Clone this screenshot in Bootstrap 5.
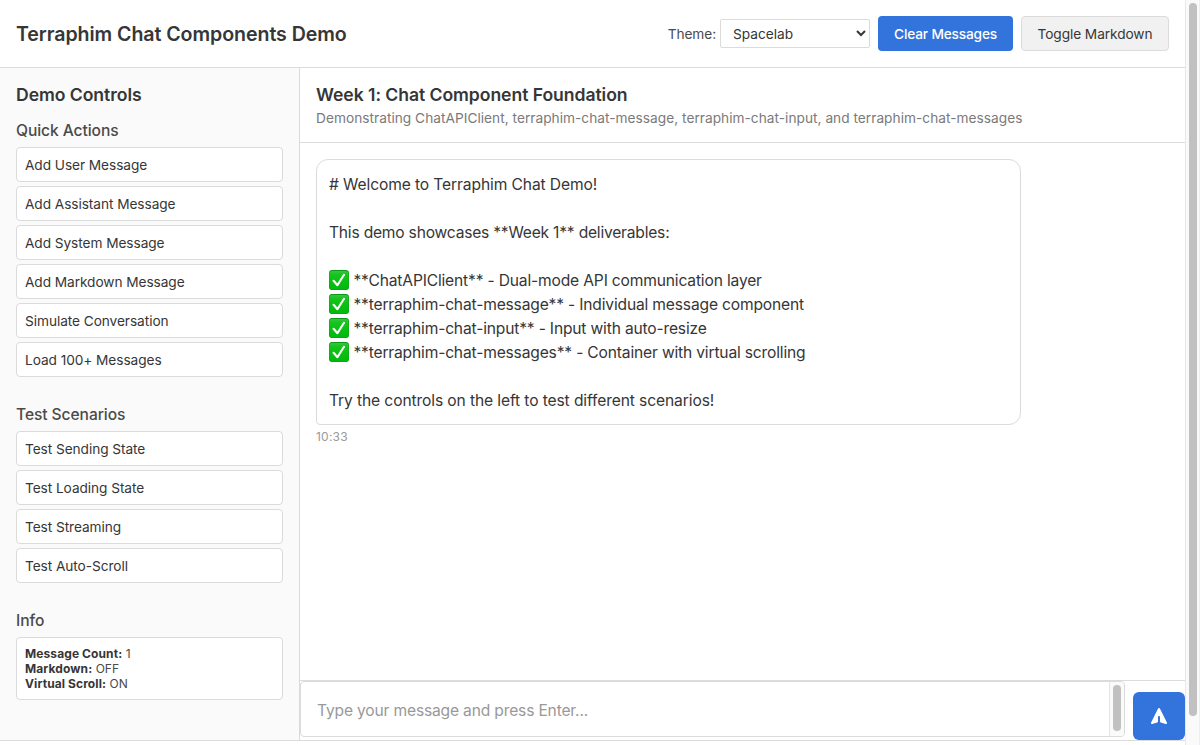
<!DOCTYPE html>
<html lang="en">
<head>
<meta charset="utf-8">
<meta name="viewport" content="width=device-width, initial-scale=1">
<title>Terraphim Chat Components Demo</title>
<link href="https://cdn.jsdelivr.net/npm/bootstrap@5.3.0/dist/css/bootstrap.min.css" rel="stylesheet">
<style>
:root{--line:#dbdbdb}
body{font-family:Inter,Roboto,sans-serif;font-size:15.6px;color:#363636;background:#fff;overflow:hidden;height:100vh}
.app-shell{height:741px;border-bottom:1px solid var(--line)}
.top-bar{height:68px;border-bottom:1px solid var(--line)}
.side{width:300px;background:#fafafa;border-right:1px solid var(--line)}
h1{font-size:19.6px;font-weight:600;line-height:24px;letter-spacing:-.07px}
h2{font-size:17.6px;font-weight:600;line-height:22px;letter-spacing:-.06px}
h3{font-size:15.6px;font-weight:500;line-height:19px;letter-spacing:-.08px;color:#4a4a4a;margin:28px 0 7px}
h2 + section h3{margin-top:15px}
.theme-label,.theme-select,.btn,.sub{font-size:13.7px}
.theme-label{color:#4a4a4a;letter-spacing:-.1px;padding-top:2px}
.theme-select{width:150px;height:29px;color:#363636;background:#fff;border:1px solid var(--line);border-radius:2px;padding:0 0 0 8px;margin-left:4px}
.btn{--bs-btn-border-radius:4px;height:35px;line-height:17px;padding:9px 0 7px}
.btn-clear,.btn-clear:hover{width:135px;background:#3273dc;color:#fff;border:0;font-weight:500;letter-spacing:-.17px;padding:10px 0 8px}
.btn-toggle{width:148px;background:#f1f1f1;color:#363636;border:1px solid var(--line);letter-spacing:-.08px}
.btn-side{background:#fff;border:1px solid var(--line);color:#363636;text-align:left;padding:9px 8px 7px;letter-spacing:-.07px}
.info-box{font-size:12px;line-height:15px;background:#fff;border:1px solid var(--line);border-radius:4px;height:63px;color:#4a4a4a}
.info-box strong{color:#363636;letter-spacing:.1px}
.main-head{height:75px;border-bottom:1px solid var(--line)}
.sub{color:#7a7a7a;line-height:17px;letter-spacing:.022px}
.bubble{width:705px;border:1px solid var(--line);border-radius:12px 12px 12px 4px;padding:12px;line-height:24px;letter-spacing:-.17px}
.bubble p{display:flex;align-items:center;height:24px;padding-top:2px;margin:0;white-space:nowrap}
.ls-wide{letter-spacing:-.11px}
.ls-tight{letter-spacing:-.21px}
.tick{width:20px;height:20px;margin:-2px 4.4px 0 0;flex:none}
.stamp{font-size:12px;line-height:17px;color:#999;letter-spacing:.22px;margin-top:3px}
.composer{height:60px;border-top:1px solid var(--line)}
.entry{height:56px;border:1px solid var(--line);border-radius:4px;color:#999;overflow:hidden}
.entry-text{padding:4px 0 0 16px;letter-spacing:-.17px}
.entry-track{width:15px;background:#fafafa;border-left:1px solid #e4e4e4;padding:3px 3px 5px}
.send{width:52px;height:48px;background:#3273dc;border:0;border-radius:6px;color:#fff;padding:0}
.page-track{width:15px;background:#fafafa;border-left:1px solid #e8e8e8;border-right:1px solid #eee;padding:3px 2px 29px 3px}
.thumb{width:8px;height:100%;border-radius:4px;background:#c1c1c1}
</style>
</head>
<body class="d-flex">
<svg width="0" height="0" class="position-absolute">
  <defs>
    <linearGradient id="g" x1="0" y1="0" x2="0" y2="1"><stop offset="0" stop-color="#3fc048"/><stop offset=".2" stop-color="#15c51c"/><stop offset="1" stop-color="#00b80b"/></linearGradient>
    <symbol id="tick" viewBox="0 0 20 20">
      <rect x="0" y="0" width="20" height="20" rx="3.2" fill="#0b9a17"/>
      <rect x=".4" y=".9" width="19.2" height="18.6" rx="2.8" fill="url(#g)"/>
      <path d="M4.6 10.8 8.4 15.2 15 4.8" fill="none" stroke="#fff" stroke-width="2.1" stroke-linecap="round" stroke-linejoin="round"/>
    </symbol>
  </defs>
</svg>
<div class="app-shell d-flex flex-column flex-grow-1">
  <header class="top-bar d-flex align-items-center justify-content-between px-3 flex-shrink-0">
    <h1 class="m-0">Terraphim Chat Components Demo</h1>
    <div class="d-flex align-items-center gap-2">
      <div class="d-flex align-items-center"><label class="theme-label" for="theme">Theme:</label>
      <select id="theme" class="theme-select"><option>Spacelab</option></select></div>
      <button class="btn btn-clear">Clear Messages</button>
      <button class="btn btn-toggle">Toggle Markdown</button>
    </div>
  </header>
  <div class="d-flex flex-grow-1">
    <aside class="side p-3 flex-shrink-0">
      <h2 class="m-0">Demo Controls</h2>
      <section>
        <h3>Quick Actions</h3>
        <div class="d-grid gap-1">
          <button class="btn btn-side">Add User Message</button>
          <button class="btn btn-side">Add Assistant Message</button>
          <button class="btn btn-side">Add System Message</button>
          <button class="btn btn-side">Add Markdown Message</button>
          <button class="btn btn-side">Simulate Conversation</button>
          <button class="btn btn-side">Load 100+ Messages</button>
        </div>
      </section>
      <section>
        <h3>Test Scenarios</h3>
        <div class="d-grid gap-1">
          <button class="btn btn-side">Test Sending State</button>
          <button class="btn btn-side">Test Loading State</button>
          <button class="btn btn-side">Test Streaming</button>
          <button class="btn btn-side">Test Auto-Scroll</button>
        </div>
      </section>
      <section>
        <h3>Info</h3>
        <div class="info-box p-2">
          <div><strong>Message Count:</strong> 1</div>
          <div><strong>Markdown:</strong> OFF</div>
          <div><strong>Virtual Scroll:</strong> ON</div>
        </div>
      </section>
    </aside>
    <main class="d-flex flex-column flex-grow-1">
      <div class="main-head p-3 pb-0">
        <h2 class="mb-1">Week 1: Chat Component Foundation</h2>
        <div class="sub">Demonstrating ChatAPIClient, terraphim-chat-message, terraphim-chat-input, and terraphim-chat-messages</div>
      </div>
      <div class="flex-grow-1 p-3">
        <div class="bubble">
          <p class="ls-wide"># Welcome to Terraphim Chat Demo!</p>
          <p></p>
          <p class="ls-tight">This demo showcases **Week 1** deliverables:</p>
          <p></p>
          <p><svg class="tick"><use href="#tick"/></svg>**ChatAPIClient** - Dual-mode API communication layer</p>
          <p><svg class="tick"><use href="#tick"/></svg>**terraphim-chat-message** - Individual message component</p>
          <p><svg class="tick"><use href="#tick"/></svg>**terraphim-chat-input** - Input with auto-resize</p>
          <p><svg class="tick"><use href="#tick"/></svg>**terraphim-chat-messages** - Container with virtual scrolling</p>
          <p></p>
          <p class="ls-wide">Try the controls on the left to test different scenarios!</p>
        </div>
        <div class="stamp">10:33</div>
      </div>
      <div class="composer d-flex gap-2">
        <div class="entry d-flex flex-grow-1">
          <div class="entry-text d-flex align-items-center flex-grow-1">Type your message and press Enter...</div>
          <div class="entry-track"><div class="thumb"></div></div>
        </div>
        <button class="send d-flex align-items-center justify-content-center align-self-end" aria-label="Send">
          <svg width="20" height="20" viewBox="0 0 20 20" fill="currentColor"><path d="M10.894 2.553a1 1 0 00-1.788 0l-7 14a1 1 0 001.169 1.409l5-1.429A1 1 0 009 15.571V11a1 1 0 112 0v4.571a1 1 0 00.725.962l5 1.428a1 1 0 001.17-1.408l-7-14z"/></svg>
        </button>
      </div>
    </main>
  </div>
</div>
<div class="page-track flex-shrink-0"><div class="thumb"></div></div>
<script src="https://cdn.jsdelivr.net/npm/bootstrap@5.3.0/dist/js/bootstrap.bundle.min.js"></script>
</body>
</html>
